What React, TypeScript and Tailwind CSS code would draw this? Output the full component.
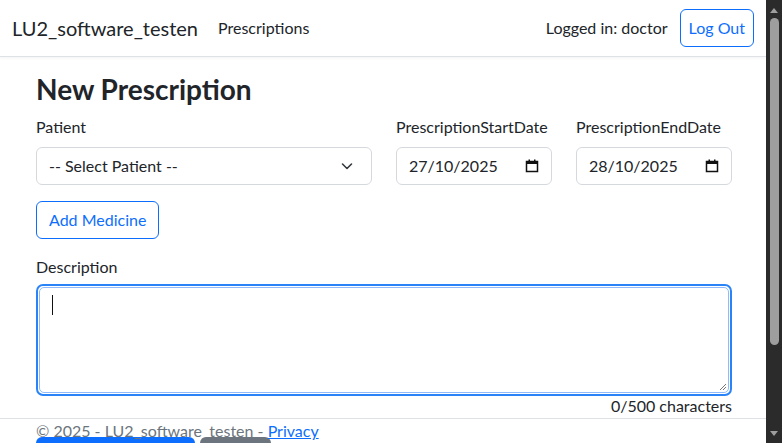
import React from 'react'

const font = { fontFamily: 'Lato, "Noto Sans", sans-serif' }

function Chevron() {
  return (
    <svg width="16" height="16" viewBox="0 0 16 16" fill="none">
      <path d="M3.5 6l4.5 4.5L12.5 6" stroke="#343a40" strokeWidth="1.6" strokeLinecap="round" strokeLinejoin="round" />
    </svg>
  )
}

function CalendarIcon() {
  return (
    <svg width="14" height="14" viewBox="0 0 14 14" fill="none">
      <rect x="1.5" y="2.5" width="11" height="10" stroke="#111" strokeWidth="1.5" />
      <rect x="1.5" y="2.5" width="11" height="2.5" fill="#111" />
      <rect x="3.5" y="0.5" width="1.5" height="2.5" fill="#111" />
      <rect x="9" y="0.5" width="1.5" height="2.5" fill="#111" />
    </svg>
  )
}

function DateField({ label, value }: { label: string; value: string }) {
  return (
    <div className="w-[156px] shrink-0">
      <div className="mb-2 leading-6 text-[#212529]">{label}</div>
      <div className="h-[38px] rounded-md border border-[#d5d9de] px-3 flex items-center justify-between">
        <span className="text-[#212529]">{value}</span>
        <CalendarIcon />
      </div>
    </div>
  )
}

function Scrollbar() {
  return (
    <div className="w-4 shrink-0 bg-[#2b2b2b] flex flex-col items-center">
      <svg width="10" height="12" viewBox="0 0 10 12" className="mt-1">
        <path d="M1 9L5 4l4 5z" fill="#9e9e9e" />
      </svg>
      <div className="mt-[2px] w-[9px] h-[327px] rounded-full bg-[#9e9e9e]" />
      <div className="flex-1" />
      <svg width="10" height="12" viewBox="0 0 10 12" className="mb-[3px]">
        <path d="M1 3l4 5 4-5z" fill="#9e9e9e" />
      </svg>
    </div>
  )
}

export default function App() {
  return (
    <div className="w-[782px] h-[443px] flex overflow-hidden bg-white" style={font}>
      <div className="relative flex-1 min-w-0">
        {/* Navbar */}
        <nav className="h-[57px] border-b border-[#dee2e6] shadow-[0_1px_3px_rgba(0,0,0,0.05)] px-3 flex items-center">
          <span className="text-[20px] text-[#212529] mr-[20px]">LU2_software_testen</span>
          <span className="text-[#212529]">Prescriptions</span>
          <div className="flex-1" />
          <span className="text-[#212529] mr-3">Logged in: doctor</span>
          <button className="h-[38px] px-2 rounded-md border border-[#0d6efd] text-[#0d6efd]">Log Out</button>
        </nav>

        {/* Main */}
        <main className="pl-9 pr-[34px] pt-4">
          <h2 className="text-[28px] font-bold leading-[1.2] text-[#212529] mb-2">New Prescription</h2>

          <div className="flex gap-6 mb-4">
            <div className="w-[336px] shrink-0">
              <div className="mb-2 leading-6 text-[#212529]">Patient</div>
              <div className="h-[38px] rounded-md border border-[#d5d9de] pl-3 pr-4 flex items-center justify-between">
                <span className="text-[#212529]">-- Select Patient --</span>
                <Chevron />
              </div>
            </div>
            <DateField label="PrescriptionStartDate" value="27/10/2025" />
            <DateField label="PrescriptionEndDate" value="28/10/2025" />
          </div>

          <button className="h-[38px] px-3 rounded-md border border-[#0d6efd] text-[#0d6efd] mb-4">Add Medicine</button>

          <div className="mb-[5px] leading-6 text-[#212529]">Description</div>
          <div className="relative h-[112px] rounded-[7px] border-2 border-[#2a84f7] p-px">
            <div className="h-full rounded-[5px] border border-[#8fbbfb] px-3 pt-[7px]">
              <div className="w-px h-[20px] bg-[#111]" />
            </div>
            <svg width="8" height="8" viewBox="0 0 8 8" className="absolute right-[3px] bottom-[3px]">
              <path d="M7 1L1 7M7 4L4 7" stroke="#777" strokeWidth="1" />
            </svg>
          </div>
          <div className="text-right text-[#212529] leading-6 -mt-[2px]">0/500 characters</div>

          <div className="flex gap-[5px] mt-[19px]">
            <div className="w-[159px] h-[38px] rounded-md bg-[#0d6efd]" />
            <div className="w-[71px] h-[38px] rounded-md bg-[#6c757d]" />
          </div>
        </main>

        {/* Footer */}
        <footer className="absolute left-0 right-0 top-[418px] border-t border-[#dee2e6] px-9 leading-[24px] text-[#6c757d]">
          © 2025 - LU2_software_testen - <span className="text-[#0d6efd] underline">Privacy</span>
        </footer>
      </div>
      <Scrollbar />
    </div>
  )
}
